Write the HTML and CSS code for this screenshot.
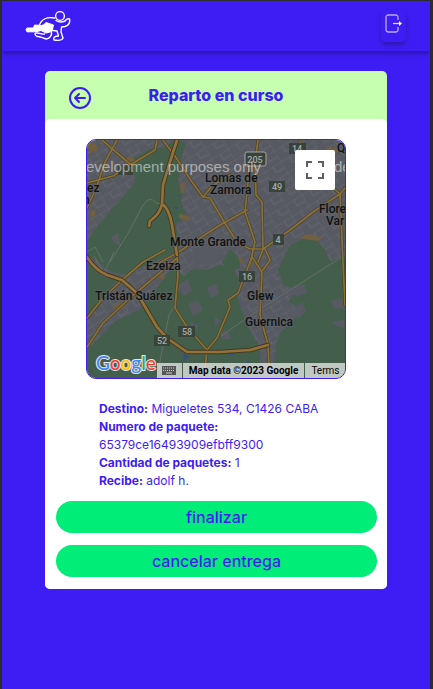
FILE: index.html
```
<!DOCTYPE html>
<html lang="es">
<head>
<meta charset="utf-8">
<meta name="viewport" content="width=device-width, initial-scale=1">
<title>Reparto en curso</title>
<link rel="stylesheet" href="styles.css">
</head>
<body>
<header class="topbar">
  <a class="brand" href="#" aria-label="Inicio">
    <svg width="46" height="32" viewBox="25 10 46 32" fill="none" stroke="#fff" stroke-width="1.400" stroke-linecap="round" stroke-linejoin="round">
      <circle cx="60" cy="16" r="4.400"/>
      <path d="M54.500 18C49 17 43.500 18.500 41 22L39 25.500"/>
      <path d="M56 20.500C59 22.500 62 22.500 65 21C66.500 19 69 18 69.700 19.500C70 23 68.500 25.500 65 26.500L61.500 27L61 32L63 38C62 40.500 57 40.500 54 40C53 37.500 55 36 58.500 36L57 31L53 30.500"/>
      <path d="M51.500 32C52 35 50 38.500 46.500 39C43 38.500 40 36 37 36.500C34.500 35 34 32.500 37.500 33C40 33 42 34.500 44.500 34"/>
      <path d="M44 24.500L46 22.500L53.500 25L52 31.500L46 33L41 30.500L36 31.800H27Q25 29.500 27 28L33.500 28L34.500 25L41 25.500Z" fill="#fff" stroke-width="1"/>
    </svg>
  </a>
  <button class="logout" type="button" aria-label="Salir">
    <svg width="18" height="20" viewBox="0 0 18 20" fill="none" stroke="#b7aaff" stroke-width="1.300">
      <path d="M13 6V3.500Q13 1 10.500 1H3.500Q1 1 1 3.500V15.500Q1 18 3.500 18H10.500Q13 18 13 15.500V13"/>
      <path d="M8 9.500H15" stroke="#ddd6ff"/>
      <path d="M14 7L17 9.500L14 12Z" fill="#fff" stroke="none"/>
    </svg>
  </button>
</header>
<main class="card">
  <div class="card-head">
    <a class="back" href="#" aria-label="Volver">
      <svg width="24" height="24" viewBox="0 0 24 24" fill="none" stroke="#3d1df3" stroke-width="2" stroke-linecap="round" stroke-linejoin="round">
        <circle cx="12" cy="12" r="10"/><path d="M17 12H7M11 8L7 12L11 16"/>
      </svg>
    </a>
    <h1>Reparto en curso</h1>
  </div>
  <div class="card-body">
    <div class="map">
      <svg class="map-art" viewBox="87 140 258 238" preserveAspectRatio="xMidYMid slice">
        <defs>
          <pattern id="streets" width="19" height="13" patternUnits="userSpaceOnUse" patternTransform="rotate(-32)">
            <path d="M0 0H19M0 0V13M10 0V7M10 7H19" fill="none" stroke="#686b72" stroke-width=".7"/>
          </pattern>
          <g id="roads">
            <path d="M102 140L130 164M117 140L105 162L97 186L87 208M87 183L113 176L130 165L155 150L157 140"/>
            <path d="M163 140L177 159L190 179L203 197L210 198L223 220L237 242L250 249L263 249"/>
            <path d="M230 175L212 186L203 197M150 268L177 253L197 240L220 225L247 210"/>
            <path d="M258 140L255 162L256 195L262 202L263 249L258 262M249 162L248 182L245 212L255 242L250 264"/>
            <path d="M263 249L290 230L313 212L340 194L346 187M300 142L327 182L340 194L343 262L345 305"/>
            <path d="M87 318L103 298L122 280L143 262L165 250M87 347L103 323L130 298L177 258"/>
            <path d="M177 255L178 275L175 308L187 327L207 350L217 338L230 307L228 300L238 293L252 257"/>
            <path d="M252 257L262 272L260 315L268 345L269 366M265 249L270 260L263 270"/>
            <path d="M207 350L204 378"/>
          </g>
          <g id="highways">
            <path d="M177 140L170 162L163 185L162 204Q160 214 150 221L149 226M162 204Q169 208 172 225L177 255"/>
            <path d="M87 257Q95 270 107 275L122 280L137 293L157 327L167 338L187 352L220 352L250 350L268 345"/>
          </g>
        </defs>
        <rect x="87" y="140" width="258" height="238" fill="#575a62"/>
        <rect x="87" y="140" width="258" height="238" fill="url(#streets)"/>
        <g fill="#435f4b">
          <path d="M134 158L150 149L165 147L174 140L186 143L181 160L178 183L183 193L181 203L187 217L176 224L178 241L174 253L155 262L141 267L127 275L111 272L98 262L87 255V242L96 228L111 210L124 196L135 182Z"/>
          <path d="M87 262L101 276L118 281L107 291L99 308L87 317ZM87 350L106 331L114 322L127 316L141 309L151 296L162 281L171 269L184 276L193 269L206 270L220 265L232 267L239 280L237 295L241 309L247 325L260 348L261 378H87Z"/>
          <path d="M284 258L289 246L302 239L316 240L324 248L330 261L345 256V378H273L276 344L281 331L293 322L300 307L288 302L296 291L283 284L278 270Z"/>
          <path d="M222 262L230 249L239 258L240 268L230 272Z"/>
        </g>
        <g fill="#575a62">
          <path d="M111 237L118 232L121 247L114 243ZM176 286L188 279L192 291L183 296ZM188 304L198 300L203 310L193 316ZM207 287L217 284L219 294L210 298ZM190 321L199 326L193 332ZM220 333L228 331L231 339L222 340ZM289 288L304 284L307 293L296 297ZM294 307L303 302L306 312L297 319ZM330 301L345 298V309L335 308ZM183 256L200 249L225 250L216 262L199 265ZM215 317L221 320L215 327ZM331 323L344 319L345 329Z"/>
        </g>
        <g fill="#725f3d">
          <path d="M87 145L95 142L98 150L90 153ZM126 158L132 156L136 162L130 169L125 165ZM180 184L185 182L184 192L181 194ZM92 210L96 211L94 218L90 214ZM179 213L190 217L187 221L179 218ZM112 307L121 302L126 307L117 311ZM157 277L165 274L164 280ZM299 238L308 234L322 238L318 241ZM326 146L338 149L334 157ZM238 257L243 259L241 264Z"/>
        </g>
        <path d="M110 262Q128 236 142 207Q149 194 156 203L162 204M87 252L95 247L103 262M221 336L257 311L345 255M177 301L169 315L163 345L157 378M94 256L104 273L114 252" fill="none" stroke="#6a736e" stroke-width=".8"/>
        <path d="M183 353L189 357L184 361ZM244 365L249 360L248 373ZM175 207H178V209H175ZM178 195H180V197H178ZM229 352H234V355H229Z" fill="#384e78"/>
        <g fill="none" stroke-linejoin="round" stroke-linecap="round">
          <use href="#roads" stroke="#4b4128" stroke-width="3"/>
          <use href="#roads" stroke="#8a7034" stroke-width="1.700"/>
          <use href="#highways" stroke="#45391f" stroke-width="4.500"/>
          <use href="#highways" stroke="#92723a" stroke-width="2.700"/>
        </g>
        <g class="shields">
          <rect x="118" y="165" width="15" height="10"/>
          <rect x="289" y="143" width="17" height="11"/><text x="297" y="152">14</text>
          <rect x="245" y="152" width="21" height="14" rx="2" stroke="#a5a5a5"/><text x="255" y="163">205</text>
          <rect x="269" y="181" width="16" height="11"/><text x="277" y="190">49</text>
          <rect x="273" y="234" width="11" height="11"/><text x="278" y="243">4</text>
          <rect x="239" y="271" width="16" height="11"/><text x="247" y="280">16</text>
          <rect x="178" y="326" width="17" height="11"/><text x="187" y="335">58</text>
          <rect x="154" y="335" width="16" height="11"/><text x="162" y="344">52</text>
        </g>
        <g class="places">
          <text x="87" y="192">ez</text><text x="83" y="204">n</text>
          <text x="337" y="152">Q</text>
          <text x="205" y="182">Lomas de</text><text x="210" y="194">Zamora</text>
          <text x="319" y="213">Flore</text><text x="326" y="225">Var</text>
          <text x="170" y="246">Monte Grande</text>
          <text x="146" y="270">Ezeiza</text>
          <text x="95" y="300">Tristán Suárez</text>
          <text x="247" y="300">Glew</text>
          <text x="245" y="326">Guernica</text>
        </g>
        <g class="watermark">
          <text x="86" y="172">evelopment purposes only</text>
          <text x="334" y="172">de</text>
        </g>
        <text class="google" x="96" y="370"><tspan fill="#4285f4">G</tspan><tspan fill="#ea4335">o</tspan><tspan fill="#fbbc05">o</tspan><tspan fill="#4285f4">g</tspan><tspan fill="#34a853">l</tspan><tspan fill="#ea4335">e</tspan></text>
      </svg>
      <button class="fullscreen" type="button" aria-label="Pantalla completa">
        <svg width="18" height="18" viewBox="0 0 18 18" fill="none" stroke="#5f5f5f" stroke-width="2"><path d="M1 6V1H6M12 1H17V6M17 12V17H12M6 17H1V12"/></svg>
      </button>
      <div class="map-legal">
        <button class="keys" type="button" aria-label="Combinaciones de teclas">
          <svg width="14" height="9" viewBox="0 0 14 9"><rect width="14" height="9" fill="#555"/><path d="M1 2H13M1 4.500H13" stroke="#ccc" stroke-dasharray="1 1"/><path d="M4 7H10" stroke="#ccc"/></svg>
        </button>
        <span class="copyright">Map data ©2023 Google</span>
        <a class="terms" href="#">Terms</a>
      </div>
    </div>
    <div class="details">
      <p><strong>Destino:</strong> Migueletes 534, C1426 CABA</p>
      <p><strong>Numero de paquete:</strong> 65379ce16493909efbff9300</p>
      <p><strong>Cantidad de paquetes:</strong> 1</p>
      <p><strong>Recibe:</strong> adolf h.</p>
    </div>
    <div class="actions">
      <button class="action" type="button">finalizar</button>
      <button class="action" type="button">cancelar entrega</button>
    </div>
  </div>
</main>
</body>
</html>
```

FILE: styles.css
```
* { box-sizing: border-box; }

body {
  margin: 0;
  min-height: 100vh;
  border: solid #2c2c2c;
  border-width: 1px 3px 0 2px;
  background: #3d1df3;
  color: #3d1df3;
  font-family: Inter, sans-serif;
}

button { border: 0; padding: 0; font: inherit; color: inherit; cursor: pointer; }

.topbar {
  display: flex;
  justify-content: space-between;
  align-items: center;
  height: 50px;
  padding: 0 24px 0 23px;
  box-shadow: 0 3px 4px rgba(0, 0, 0, .25);
}

.brand, .back { display: flex; }

.logout {
  display: grid;
  justify-content: center;
  align-content: start;
  width: 25px;
  height: 32px;
  padding-top: 4px;
  border-radius: 5px;
  background: #3d1df3;
  box-shadow: 0 3px 4px rgba(0, 0, 0, .25);
}

.card {
  width: 80%;
  margin: 20px auto 0;
  border-radius: 5px;
  background: #c6ffb0;
}

.card-head {
  display: grid;
  grid-template-columns: 48px 1fr 48px;
  align-items: center;
  height: 48px;
}

.back { justify-content: flex-end; padding-top: 6px; margin-right: 1px; }

h1 {
  margin: 0;
  text-align: center;
  font-size: 16px;
  line-height: 20px;
  font-weight: 800;
}

.card-body {
  padding: 20px 10px 12px 11px;
  border-radius: 5px;
  background: #fff;
}

.map {
  position: relative;
  display: flex;
  flex-direction: column;
  justify-content: space-between;
  align-items: flex-end;
  width: 260px;
  max-width: 100%;
  height: 240px;
  margin: 0 auto;
  border: 1px solid #3d1df3;
  border-radius: 10px;
  overflow: hidden;
}

.map-art { position: absolute; inset: 0; width: 100%; height: 100%; }

.shields rect { fill: #38443a; }
.shields text { fill: #a9aaa8; font: 500 9px Roboto, sans-serif; text-anchor: middle; }

.places text {
  fill: #111;
  stroke: #62656a;
  stroke-width: 2px;
  stroke-opacity: .6;
  paint-order: stroke;
  font: 500 12px Roboto, sans-serif;
}

.watermark { fill: rgba(255, 255, 255, .5); font: 15px "Liberation Sans", sans-serif; }

.google {
  font: 500 19px Lato, sans-serif;
  stroke: #e8e8e8;
  stroke-width: 2px;
  paint-order: stroke;
}

.fullscreen {
  position: relative;
  display: grid;
  place-items: center;
  width: 40px;
  height: 40px;
  margin: 10px;
  border-radius: 2px;
  background: #fff;
}

.map-legal {
  position: relative;
  display: flex;
  height: 15px;
  background: rgba(245, 245, 245, .7);
  color: #000;
  font: 10px/16px Roboto, sans-serif;
}

.keys { display: grid; place-items: center; width: 25px; background: none; }
.copyright { padding: 0 6px; border: solid #435f4b; border-width: 0 1px; font-weight: 700; }
.terms { padding: 0 6px; color: inherit; text-decoration: none; }

.details {
  width: 235px;
  max-width: 100%;
  margin: 21px auto 0;
  font-size: 12px;
  line-height: 18px;
}

.details p { margin: 0; }

.actions { display: grid; gap: 12px; margin-top: 11px; }

.action {
  height: 32px;
  border-radius: 16px;
  background: #00ed78;
  font-size: 16px;
  font-weight: 500;
}
```
